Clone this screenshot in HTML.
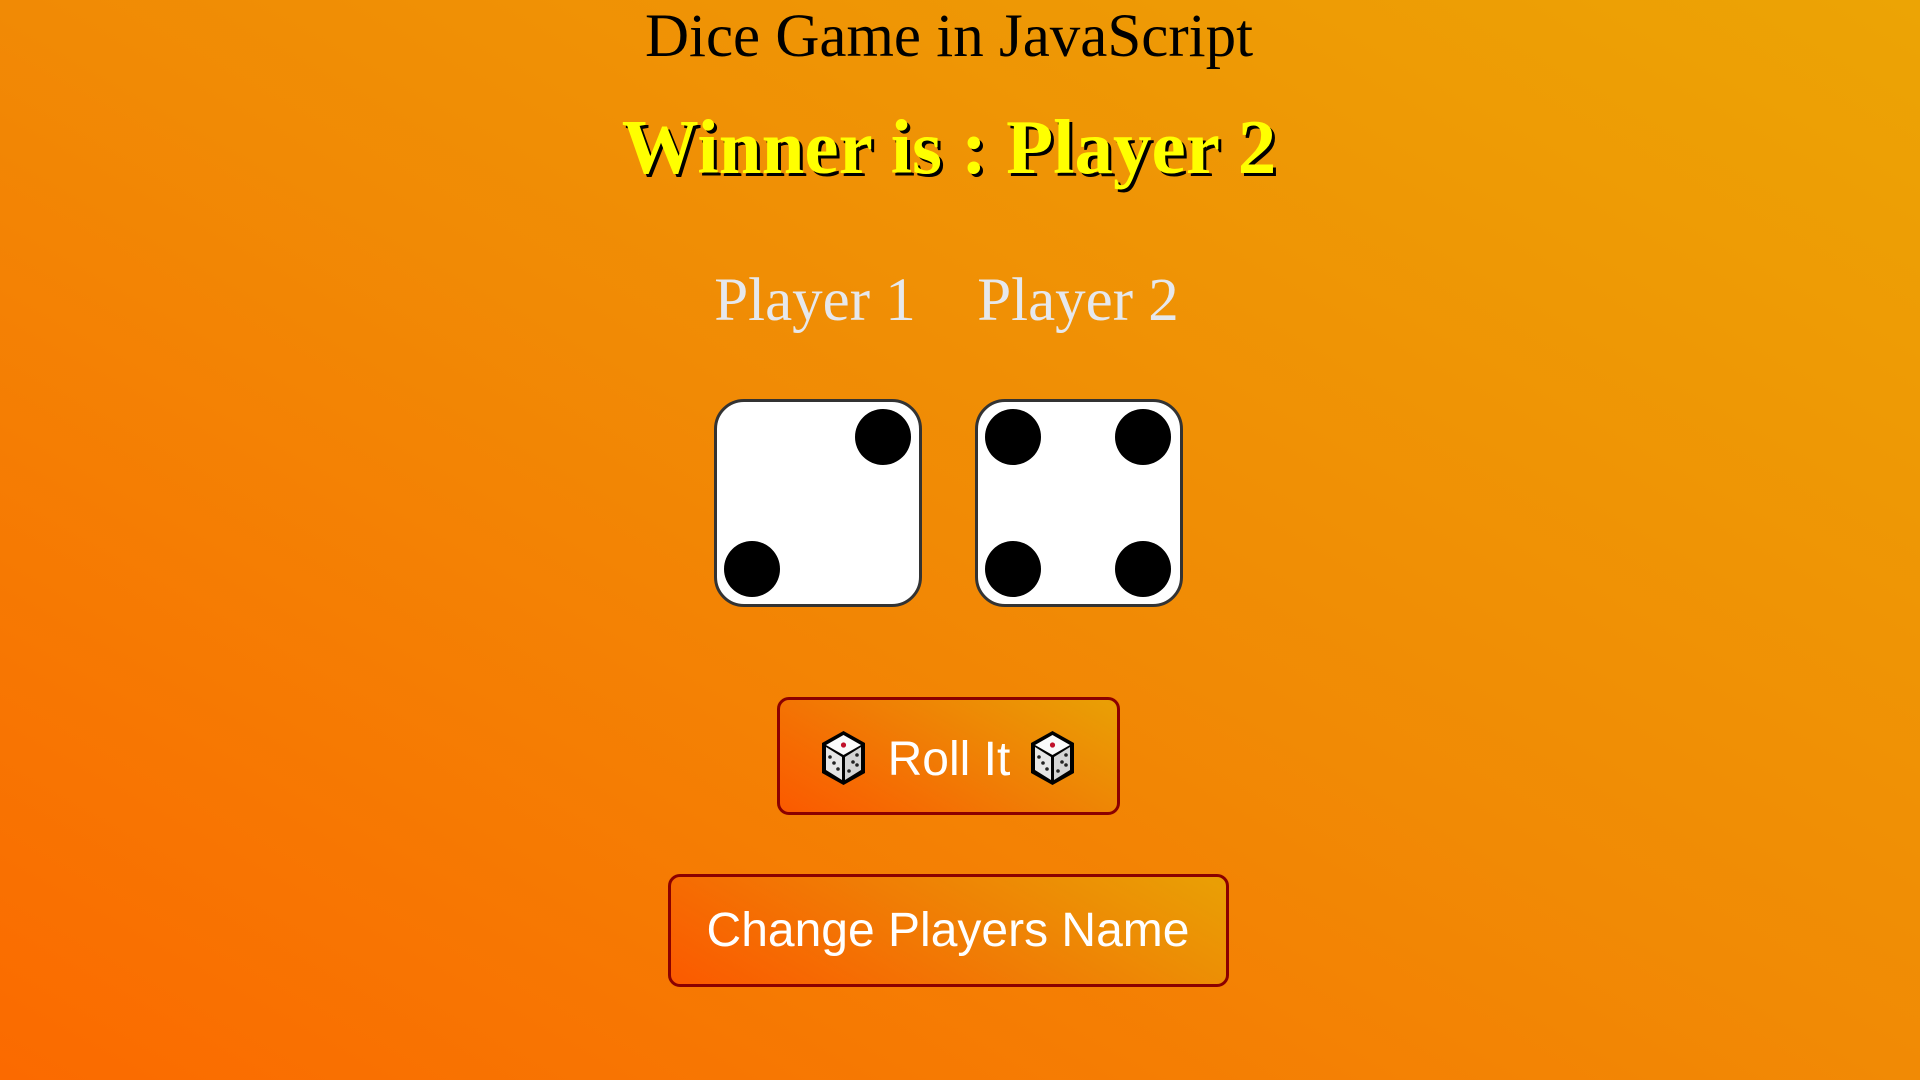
<!DOCTYPE html>
<html><head><meta charset="utf-8"><style>
html,body{margin:0;padding:0;width:1920px;height:1080px;overflow:hidden}
body{background:linear-gradient(to top right,#fb6a00 0%,#f18a05 50%,#eca405 100%);position:relative;font-family:"Liberation Sans",sans-serif}
.die{position:absolute;top:399px;width:202px;height:202px;background:#fff;border:3px solid #333;border-radius:30px}
.pip{position:absolute;width:56px;height:56px;border-radius:50%;background:#000}
.btn{position:absolute;box-sizing:border-box;border:3px solid #8b0000;border-radius:12px;background:linear-gradient(30deg,#fb5a00 0%,#f07d05 50%,#e9a005 100%)}
svg.t{position:absolute;left:0;top:0}
</style></head><body>
<div class="die" style="left:714px"><div class="pip" style="left:138px;top:7px"></div><div class="pip" style="left:7px;top:139px"></div></div>
<div class="die" style="left:975px"><div class="pip" style="left:7px;top:7px"></div><div class="pip" style="left:137px;top:7px"></div><div class="pip" style="left:7px;top:139px"></div><div class="pip" style="left:137px;top:139px"></div></div>
<div class="btn" style="left:777px;top:697px;width:343px;height:118px"></div>
<div class="btn" style="left:668px;top:874px;width:561px;height:113px"></div>
<svg class="t" width="1920" height="1080">
<defs><g id="cube">
<polygon points="21.5,0 43,12 43,42 21.5,54 0,42 0,12" fill="#000"/>
<polygon points="21.5,4 39,14 21.5,24 4,14" fill="#fafafa"/>
<polygon points="4,16 20,26 20,49 4,39" fill="#e6e6e6"/>
<polygon points="23,26 39,16 39,39 23,49" fill="#d4d4d4"/>
<circle cx="21.5" cy="14" r="2.6" fill="#c0102a"/>
<circle cx="8" cy="26" r="1.8" fill="#222"/><circle cx="12" cy="32" r="1.8" fill="#222"/><circle cx="16" cy="38" r="1.8" fill="#222"/>
<circle cx="35" cy="24" r="1.8" fill="#222"/><circle cx="31" cy="31" r="1.8" fill="#222"/><circle cx="27" cy="40" r="1.8" fill="#222"/><circle cx="35" cy="34" r="1.8" fill="#222"/>
</g></defs>
<text x="949" y="56" text-anchor="middle" font-family="Liberation Serif,serif" font-size="61" fill="#000">Dice Game in JavaScript</text>
<text x="952" y="176" text-anchor="middle" font-family="Liberation Serif,serif" font-weight="bold" font-size="77" fill="#000">Winner is : Player 2</text>
<text x="949" y="173" text-anchor="middle" font-family="Liberation Serif,serif" font-weight="bold" font-size="77" fill="#ffff00">Winner is : Player 2</text>
<text x="815" y="320" text-anchor="middle" font-family="Liberation Serif,serif" font-size="61" fill="#e6e8ec">Player 1</text>
<text x="1078" y="320" text-anchor="middle" font-family="Liberation Serif,serif" font-size="61" fill="#e6e8ec">Player 2</text>
<use href="#cube" x="822" y="731"/>
<use href="#cube" x="1031" y="731"/>
<text x="949" y="775" text-anchor="middle" font-family="Liberation Sans,sans-serif" font-size="48" fill="#fff">Roll It</text>
<text x="948" y="946" text-anchor="middle" font-family="Liberation Sans,sans-serif" font-size="48" fill="#fff">Change Players Name</text>
</svg>
</body></html>
